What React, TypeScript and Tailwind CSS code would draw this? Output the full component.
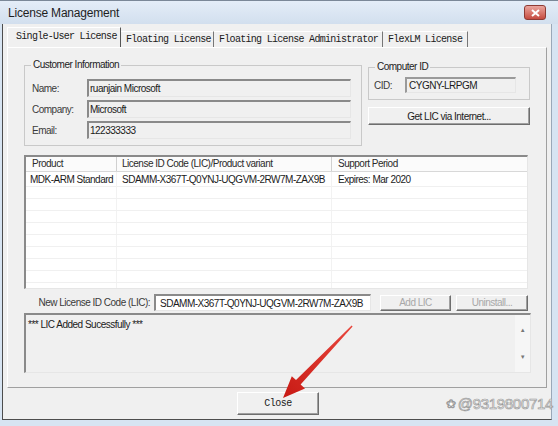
import React from "react";

const sunken =
  "border-t-2 border-l-2 border-b border-r border-t-[#8a8a8a] border-l-[#8a8a8a] border-b-[#e6e6e6] border-r-[#e6e6e6]";
const raised =
  "border border-t-[#ffffff] border-l-[#ffffff] border-b-[#6e6e6e] border-r-[#6e6e6e] shadow-[inset_-1px_-1px_0_#a0a0a0]";

const TABS = [
  { label: "Floating License", w: "w-[93px]" },
  { label: "Floating License Administrator", w: "w-[169px]" },
  { label: "FlexLM License", w: "w-[85px]" },
];

const CUSTOMER = [
  { label: "Name:", value: "ruanjain Microsoft" },
  { label: "Company:", value: "Microsoft" },
  { label: "Email:", value: "122333333" },
];

function GroupBox({
  title,
  className,
  children,
}: {
  title: string;
  className: string;
  children: React.ReactNode;
}) {
  return (
    <fieldset className={`border border-[#c9c9c9] ${className}`}>
      <legend className="ml-[6px] px-[2px] text-[10px] leading-[12px] tracking-[-0.5px] text-[#222]">
        {title}
      </legend>
      {children}
    </fieldset>
  );
}

export default function App() {
  return (
    <div className="relative h-[426px] w-[558px] overflow-hidden bg-[#d7e4f2] font-['Liberation_Sans',Arial,sans-serif] text-[#1b1b1b]">
      {/* title bar */}
      <div className="flex h-[24px] items-center justify-between border-t border-[#7b8898] bg-gradient-to-b from-[#e4edf8] to-[#d2dfee] pl-[8px] pr-[12px]">
        <span className="text-[12px] tracking-[-0.2px] text-[#1e1e1e]">
          License Management
        </span>
        <div className="flex h-[15px] w-[22px] items-center justify-center rounded-[3px] border border-[#8e3b34] bg-gradient-to-b from-[#eaa59e] to-[#c54a40]">
          <svg width="9" height="8" viewBox="0 0 9 8">
            <path d="M1 1 L8 7 M8 1 L1 7" stroke="#fff" strokeWidth="2" />
          </svg>
        </div>
      </div>

      {/* window body */}
      <div className="ml-[2px] h-[396px] w-[550px] border-b border-l border-r border-b-[#4d4d4d] border-l-[#4d4d4d] border-r-[#9aa8b8] bg-[#f0f0f0]">
        {/* tab strip */}
        <div className="ml-[4px] flex h-[23px] items-end text-[10px] font-['Liberation_Mono',monospace] tracking-[-0.7px]">
          <div className="flex h-[20px] w-[114px] items-center border-l border-r border-t border-l-white border-r-[#555] border-t-white pl-[8px] pb-[2px]">
            Single-User License
          </div>
          {TABS.map((t) => (
            <div
              key={t.label}
              className={`flex h-[16px] ${t.w} items-center border-r border-t border-r-[#777] border-t-white pl-[5px]`}
            >
              {t.label}
            </div>
          ))}
        </div>

        {/* tab page */}
        <div className="ml-[4px] h-[341px] w-[540px] border border-b-[#a0a0a0] border-l-white border-r-[#a0a0a0] border-t-white pl-[16px] pt-[11px] text-[10px] tracking-[-0.5px]">
          <div className="flex">
            <GroupBox title="Customer Information" className="w-[338px] pb-[6px]">
              <div className="mt-[8px] flex flex-col gap-[3px] pl-[7px]">
                {CUSTOMER.map((r) => (
                  <div key={r.label} className="flex items-center">
                    <span className="w-[55px] text-[#3a3a3a]">{r.label}</span>
                    <div className={`flex h-[18px] w-[264px] items-center pl-[1px] ${sunken}`}>
                      {r.value}
                    </div>
                  </div>
                ))}
              </div>
            </GroupBox>

            <div className="ml-[6px] mt-[2px] flex w-[162px] flex-col">
              <GroupBox title="Computer ID" className="w-[162px] pb-[6px]">
                <div className="mt-[4px] flex items-center pl-[5px]">
                  <span className="w-[31px] text-[#3a3a3a]">CID:</span>
                  <div className={`flex h-[16px] w-[111px] items-center pl-[2px] ${sunken} border-t-[#9a9a9a] border-l-[#9a9a9a]`}>
                    CYGNY-LRPGM
                  </div>
                </div>
              </GroupBox>
              <div className={`mt-[7px] flex h-[18px] w-[162px] items-center justify-center ${raised}`}>
                Get LIC via Internet...
              </div>
            </div>
          </div>

          {/* license list */}
          <div className={`mt-[9px] h-[134px] w-[504px] overflow-hidden bg-white ${sunken}`}>
            <div className="flex h-[15px] border-b border-[#d8d8d8] bg-[#fbfbfb] text-[#2a2a2a]">
              <div className="w-[91px] border-r border-[#d0d0d0] pl-[6px] leading-[14px]">Product</div>
              <div className="w-[215px] border-r border-[#d0d0d0] pl-[5px] leading-[14px]">
                License ID Code (LIC)/Product variant
              </div>
              <div className="flex-1 pl-[6px] leading-[14px]">Support Period</div>
            </div>
            <div className="flex h-[15px] items-center border-b border-[#f0f0f0]">
              <div className="w-[91px] border-r border-[#f2f2f2] pl-[4px] leading-[15px]">MDK-ARM Standard</div>
              <div className="w-[215px] border-r border-[#f2f2f2] pl-[5px] leading-[15px]">
                SDAMM-X367T-Q0YNJ-UQGVM-2RW7M-ZAX9B
              </div>
              <div className="flex-1 pl-[6px] leading-[15px]">Expires: Mar 2020</div>
            </div>
            {Array.from({ length: 9 }).map((_, i) => (
              <div key={i} className="flex h-[12px] border-b border-[#f0f0f0]">
                <div className="w-[91px] border-r border-[#f2f2f2]" />
                <div className="w-[215px] border-r border-[#f2f2f2]" />
                <div className="flex-1" />
              </div>
            ))}
          </div>

          {/* new LIC row */}
          <div className="mt-[5px] flex items-center">
            <span className="w-[126px] text-right text-[#3a3a3a]">New License ID Code (LIC):</span>
            <div className={`ml-[4px] flex h-[17px] w-[217px] items-center bg-white pl-[4px] ${sunken}`}>
              SDAMM-X367T-Q0YNJ-UQGVM-2RW7M-ZAX9B
            </div>
            <div className={`ml-[9px] flex h-[16px] w-[71px] items-center justify-center text-[#a8a8a8] ${raised} border-b-[#3a3a3a] border-r-[#3a3a3a]`}>
              Add LIC
            </div>
            <div className={`ml-[5px] flex h-[16px] w-[72px] items-center justify-center text-[#a8a8a8] ${raised}`}>
              Uninstall...
            </div>
          </div>

          {/* output box */}
          <div className={`mt-[2px] flex h-[60px] w-[507px] ${sunken}`}>
            <div className="flex-1 pl-[2px] pt-[4px] leading-[12px]">*** LIC Added Sucessfully ***</div>
            <div className="flex w-[15px] flex-col items-center justify-between bg-[#f6f6f6] py-[12px] text-[6px] leading-[6px] text-[#777]">
              <span>▲</span>
              <span>▼</span>
            </div>
          </div>
        </div>

        {/* close button */}
        <div className="mt-[4px] flex justify-center pl-[2px]">
          <div className={`flex h-[23px] w-[82px] items-center justify-center font-['Liberation_Mono',monospace] text-[10px] tracking-[-0.5px] ${raised}`}>
            Close
          </div>
        </div>
      </div>

      {/* watermark */}
      <div className="pointer-events-none absolute left-[446px] top-[395px] flex items-center text-[15px] leading-[18px] tracking-[-0.3px] text-white [-webkit-text-stroke:0.7px_#9a9a9a]">
        <span className="mr-[2px] text-[12px]">❀</span>@9319800714
      </div>

      {/* red annotation arrow */}
      <svg className="pointer-events-none absolute left-0 top-0" width="558" height="426" viewBox="0 0 558 426">
        <defs>
          <linearGradient id="ar" x1="352" y1="326" x2="283" y2="398" gradientUnits="userSpaceOnUse">
            <stop offset="0" stopColor="#e8463c" />
            <stop offset="1" stopColor="#c81a14" />
          </linearGradient>
        </defs>
        <polygon
          points="352.6,326.4 300.6,384.4 305,388.4 283,398 291.8,376.2 296,380 351.6,325.6"
          fill="url(#ar)"
        />
      </svg>
    </div>
  );
}
